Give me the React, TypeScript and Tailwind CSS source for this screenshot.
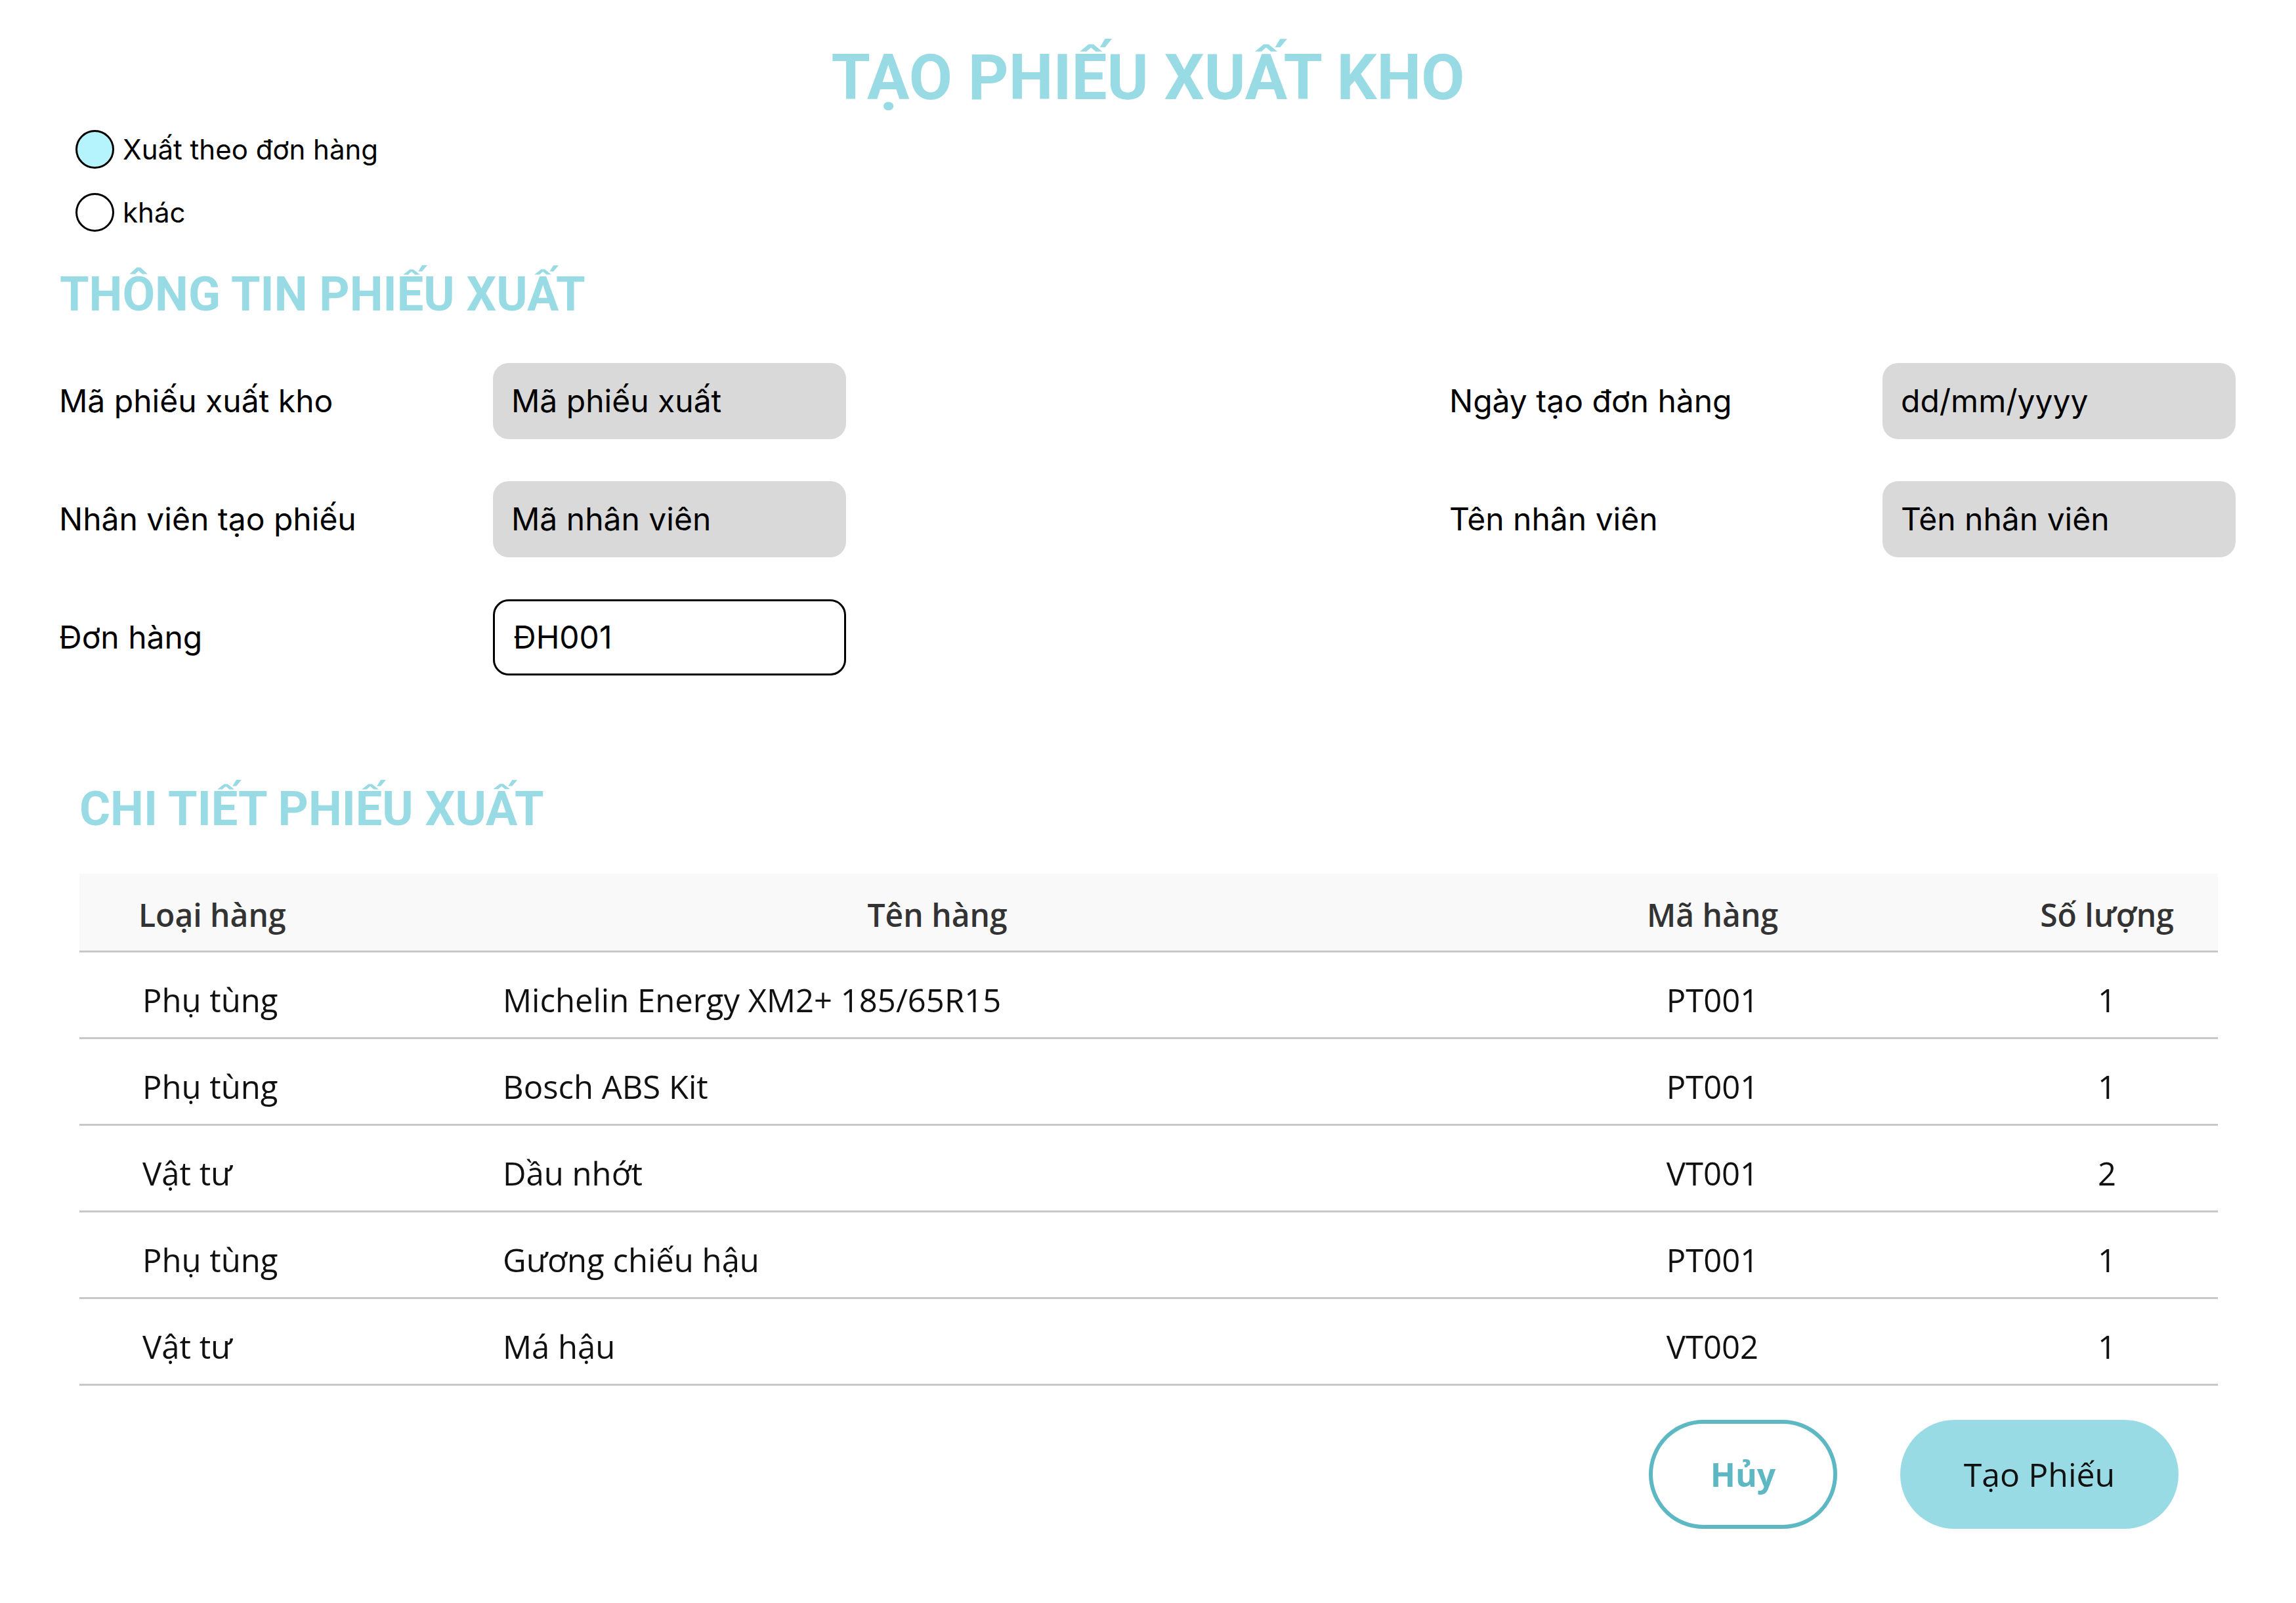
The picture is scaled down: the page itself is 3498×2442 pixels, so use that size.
const rows = [
  { type: 'Phụ tùng', name: 'Michelin Energy XM2+ 185/65R15', code: 'PT001', qty: 1 },
  { type: 'Phụ tùng', name: 'Bosch ABS Kit', code: 'PT001', qty: 1 },
  { type: 'Vật tư', name: 'Dầu nhớt', code: 'VT001', qty: 2 },
  { type: 'Phụ tùng', name: 'Gương chiếu hậu', code: 'PT001', qty: 1 },
  { type: 'Vật tư', name: 'Má hậu', code: 'VT002', qty: 1 },
]

function Radio({ label, checked }: { label: string; checked?: boolean }) {
  return (
    <label className="flex items-center gap-[13px] h-[59px]">
      <span
        className={`w-[59px] h-[59px] rounded-full border-[3px] border-black ${checked ? 'bg-[#b6f4fd]' : 'bg-white'}`}
      />
      <span className="font-['Inter'] text-[42px] text-black leading-none">{label}</span>
    </label>
  )
}

function Field({ value, outlined }: { value: string; outlined?: boolean }) {
  return (
    <div
      className={`h-[116px] flex items-center px-[28px] rounded-[24px] font-['Inter'] text-[48px] text-black ${
        outlined ? 'bg-white border-[3px] border-black' : 'bg-[#d9d9d9]'
      }`}
    >
      {value}
    </div>
  )
}

export default function App() {
  const label = "font-['Inter'] text-[48px] text-black"
  return (
    <div className="min-h-screen w-full bg-white font-['Inter',sans-serif]">
      <h1 className="pt-[70px] text-center font-['Roboto'] font-bold text-[96px] leading-none text-[#99dbe4]">
        TẠO PHIẾU XUẤT KHO
      </h1>

      <div className="mt-[32px] pl-[115px] flex flex-col gap-[37px]">
        <Radio label="Xuất theo đơn hàng" checked />
        <Radio label="khác" />
      </div>

      <h2 className="mt-[60px] pl-[91px] font-['Roboto'] font-bold text-[72px] leading-none text-[#99dbe4]">
        THÔNG TIN PHIẾU XUẤT
      </h2>

      <div className="mt-[68px] pl-[90px] grid grid-cols-[661px_538px_919px_660px_538px] gap-y-[64px] items-center">
        <div className={label}>Mã phiếu xuất kho</div>
        <Field value="Mã phiếu xuất" />
        <div />
        <div className={label}>Ngày tạo đơn hàng</div>
        <Field value="dd/mm/yyyy" />

        <div className={label}>Nhân viên tạo phiếu</div>
        <Field value="Mã nhân viên" />
        <div />
        <div className={label}>Tên nhân viên</div>
        <Field value="Tên nhân viên" />

        <div className={label}>Đơn hàng</div>
        <Field value="ĐH001" outlined />
      </div>

      <h2 className="mt-[168px] pl-[121px] font-['Roboto'] font-bold text-[72px] leading-none text-[#99dbe4]">
        CHI TIẾT PHIẾU XUẤT
      </h2>

      <div className="mt-[62px] ml-[121px] w-[3258px] font-['Open_Sans'] text-[49px]">
        <div className="grid grid-cols-[614px_1386px_976px_226px] pr-[56px] h-[120px] pt-[8px] items-center bg-[#f9f9f9] border-b-[3px] border-[#c8c8c8] font-semibold text-[#333333] text-[48px]">
          <div className="pl-[90px]">Loại hàng</div>
          <div className="text-center">Tên hàng</div>
          <div className="text-center">Mã hàng</div>
          <div className="text-center">Số lượng</div>
        </div>
        {rows.map((r, i) => (
          <div
            key={i}
            className="grid grid-cols-[614px_1386px_976px_226px] pr-[56px] h-[132px] pt-[16px] items-center border-b-[3px] border-[#c8c8c8] text-[#111111]"
          >
            <div className="pl-[96px]">{r.type}</div>
            <div className="pl-[31px]">{r.name}</div>
            <div className="text-center">{r.code}</div>
            <div className="text-center">{r.qty}</div>
          </div>
        ))}
      </div>

      <div className="mt-[52px] pr-[179px] flex justify-end gap-[96px] font-['Open_Sans'] text-[50px]">
        <button className="w-[287px] h-[166px] rounded-full border-[6px] border-[#5db8c4] bg-white text-[#5db8c4] font-bold">
          Hủy
        </button>
        <button className="w-[424px] h-[166px] rounded-full bg-[#99dbe4] text-[#111111] font-medium">
          Tạo Phiếu
        </button>
      </div>
    </div>
  )
}
